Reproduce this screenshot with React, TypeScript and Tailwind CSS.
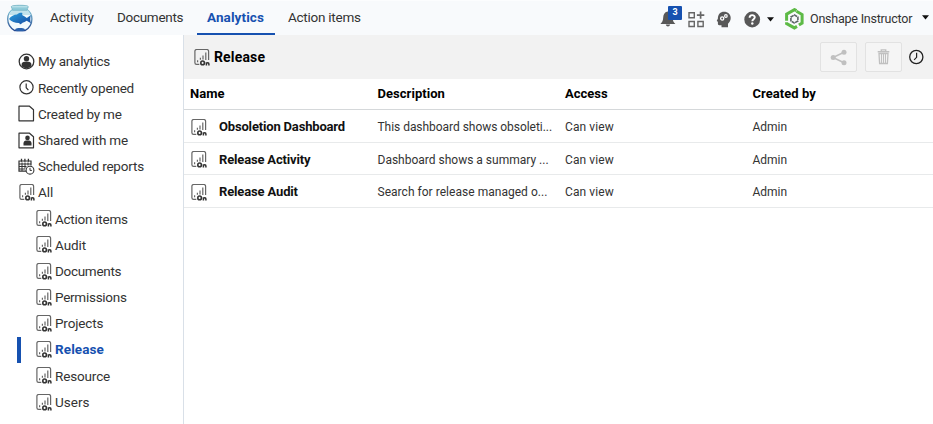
import React from "react";

function ReportIcon({ className = "" }: { className?: string }) {
  return (
    <svg className={`shrink-0 ${className}`} width="17" height="17" viewBox="0 0 17 17" fill="none">
      <path d="M5.300 15.400H2.600A1.700 1.700 0 0 1 .9 13.700V2.200A1.700 1.700 0 0 1 2.600.5H12.900A1.700 1.700 0 0 1 14.600 2.200V11" stroke="#666" strokeWidth="1.200" />
      <path d="M3.600 11.200v2M6.400 8.700v2M9 6.500v4M11.800 3.500v7.500" stroke="#666" strokeWidth="1.200" />
      <ellipse cx="8.600" cy="13.900" rx="1.800" ry="1.900" stroke="#333" strokeWidth="1.600" />
      <path d="M12.400 16.500v-3.300M12.400 14.700c.2-1.200 2.500-1.200 2.500.2v1.600" stroke="#333" strokeWidth="1.500" />
    </svg>
  );
}

function UserIcon() {
  return (
    <svg width="17" height="17" viewBox="0 0 17 17" fill="none">
      <circle cx="8.500" cy="8.500" r="7.300" stroke="#333" strokeWidth="1.300" />
      <circle cx="8.500" cy="5.700" r="2.700" fill="#333" />
      <path d="M3.600 13.200V11.500C3.600 9.600 5 8.900 6.500 8.700h4c1.500.2 2.900.9 2.900 2.800v1.700c-2.600 2.600-7.200 2.600-9.800 0z" fill="#333" />
    </svg>
  );
}

function ClockIcon() {
  return (
    <svg width="17" height="17" viewBox="0 0 17 17" fill="none" stroke="#333" strokeWidth="1.200">
      <circle cx="8.500" cy="8.300" r="6.600" />
      <path d="M8.200 4.400v4.300l2.200 2.400" />
    </svg>
  );
}

function PageIcon({ person = false }: { person?: boolean }) {
  return (
    <svg width="17" height="17" viewBox="0 0 17 17" fill="none">
      <path d="M1 1.200h10.500l4 3.500v11.100H1z" stroke="#333" strokeWidth="1.200" strokeLinejoin="round" />
      {person && (
        <g fill="#333">
          <circle cx="9.500" cy="5.900" r="2.300" />
          <path d="M5.500 13.500v-2.300c0-1.700 1.300-2.700 2.500-2.700h3c1.200 0 2.500 1 2.500 2.700v2.300z" />
        </g>
      )}
    </svg>
  );
}

function ScheduleIcon() {
  return (
    <svg width="17" height="17" viewBox="0 0 17 17" fill="none">
      <path d="M8 13.200H1V3h12v4.500" stroke="#333" strokeWidth="1.200" />
      <path d="M3.500.800v3M6.900.800v3M10.400.800v3" stroke="#333" strokeWidth="1.300" />
      <path d="M1 6h12M1 8.500h7.500M1 11h6M4 4.500v8.500M7 4.500v6M10 4.500v3" stroke="#333" strokeWidth="1" />
      <circle cx="12" cy="12.200" r="3.900" fill="#fff" stroke="#333" strokeWidth="1.100" />
      <path d="M12 9.800v2.600h1.900" stroke="#333" strokeWidth="1" />
    </svg>
  );
}

function FishbowlLogo() {
  return (
    <svg width="28" height="28" viewBox="0 0 28 28" fill="none">
      <defs>
        <linearGradient id="bowl" x1="0" y1="0" x2="0" y2="1">
          <stop offset="0" stopColor="#7fc4d6" />
          <stop offset="1" stopColor="#24488f" />
        </linearGradient>
        <linearGradient id="fish" x1="0" y1="0" x2="1" y2="1">
          <stop offset="0" stopColor="#2aa2df" />
          <stop offset="1" stopColor="#1748a0" />
        </linearGradient>
      </defs>
      <path d="M7 5.300C3.500 7.500 1.700 11 1.700 15c0 5 3 9.300 7 11.600h10.200c4.300-2.300 7-6.600 7-11.600 0-4-1.800-7.500-5.300-9.700z" fill="#f2fafd" stroke="url(#bowl)" strokeWidth="1.300" />
      <path d="M7 5.500C5 7 3.500 9 3 11h21.500c-.7-2-2-4-4-5.500z" fill="#c2e3ec" />
      <path d="M5.300 2.600c0-1.800 17-1.800 17 0 0 1.500-1.200 2-1.200 3.700H6.500c0-1.700-1.200-2.200-1.200-3.700z" fill="#8fcbd9" stroke="#70afc0" strokeWidth=".7" />
      <path d="M6 2.800h15.500" stroke="#c8e8ef" strokeWidth="1" />
      <path d="M3 15c2-3 5-4.300 8-4.500 1.500-1.500 3.500-2 5.500-1.500-.5 1-.5 1.700 0 2.300 1.500.7 3 1.600 4.300 2.600l4.200-3c-1 2.700-1 5.700 0 8.400l-4.300-2.600c-1.500 1-2.700 1.600-4.200 2.100-.5.900-1.700 1.500-2.700 1.500l-.5-1.200c-3.800.2-7.800-1.400-10.300-4.100z" fill="url(#fish)" />
      <path d="M9 25.300c1.500-1.900 8.500-1.900 10 0l-1.500 2h-7z" fill="#2a62ac" />
    </svg>
  );
}

function BellIcon() {
  return (
    <svg width="17" height="18" viewBox="0 0 17 18" fill="#585858">
      <path d="M7.500 1.500c-3 .7-4.200 3-4.300 6-.1 3.700-1.200 5-2.800 6.500h15c-1.700-1.500-2.700-2.800-2.800-6.500-.1-3-1.700-5.500-5.100-6z" />
      <path d="M5.800 14.500h4.300c-.3 2.500-4 2.500-4.300 0z" />
    </svg>
  );
}

function AppsIcon() {
  return (
    <svg width="17" height="17" viewBox="0 0 17 17" fill="none" stroke="#666" strokeWidth="1.400">
      <path d="M1 1.700h5.300v5H1zM1 10.500h5.300v5H1zM9.900 10.500h5.300v5H9.900z" />
      <path d="M12.600.5v7.300M8.900 4.200h7.400" strokeWidth="1.700" />
    </svg>
  );
}

function LearnIcon() {
  return (
    <svg width="16" height="17" viewBox="0 0 16 17" fill="none">
      <path d="M8 .7C12 .7 14.700 3.400 14.700 7c0 2.600-1.200 4.200-2.700 5.700v3.500H5.500v-2H3.300c-1 0-1.400-.5-1.400-1.400v-2L.7 10l1.200-2.600C1.900 3.400 4.400.7 8 .7z" fill="#585858" />
      <circle cx="6.200" cy="7.500" r="1.600" stroke="#fff" strokeWidth="1.300" />
      <circle cx="9.900" cy="5" r="1.300" stroke="#fff" strokeWidth="1.200" />
    </svg>
  );
}

function HelpIcon() {
  return (
    <svg width="17" height="17" viewBox="0 0 17 17" fill="none">
      <circle cx="8.200" cy="8.500" r="7.900" fill="#585858" />
      <path d="M5.600 6.700c0-3.400 5.200-3.300 5.200-.4 0 1.900-2.500 1.900-2.500 3.900" stroke="#fff" strokeWidth="1.900" />
      <circle cx="8.300" cy="12.500" r="1.200" fill="#fff" />
    </svg>
  );
}

function OnshapeLogo() {
  return (
    <svg width="20" height="22" viewBox="0 0 20 22" fill="none" strokeLinejoin="miter">
      <path d="M11.500 2.600 9.500 1.600 1.600 6.200v6.600" stroke="#5dba46" strokeWidth="3" />
      <path d="M11.500 3.300 17.100 6.500v8.600l-3.200 1.900" stroke="#5dba46" strokeWidth="3" />
      <path d="M1.600 14.300v1.200l7.800 4.400 2.600-1.500" stroke="#5dba46" strokeWidth="3" />
      <path d="m9.400 7 3.500 2v4l-3.500 2-3.500-2V9z" stroke="#5b6266" strokeWidth="1.600" strokeDasharray="3.300 .7" />
    </svg>
  );
}

function Caret() {
  return (
    <svg width="7" height="5" viewBox="0 0 7 5">
      <path d="M0 .3h7L3.500 4.600z" fill="#111" />
    </svg>
  );
}

const nav = [
  { label: "Activity", cls: "w-[67px] tracking-[-0.05px]" },
  { label: "Documents", cls: "w-[90px] tracking-[-0.3px]" },
  { label: "Analytics", cls: "w-[81px] font-bold text-[#1651b0] tracking-[0.1px]", active: true },
  { label: "Action items", cls: "tracking-[-0.25px]" },
];

const filters = [
  { label: "My analytics", icon: <UserIcon />, fit: "tracking-[-0.25px]" },
  { label: "Recently opened", icon: <ClockIcon />, fit: "tracking-[-0.22px]" },
  { label: "Created by me", icon: <PageIcon />, fit: "tracking-[-0.22px]" },
  { label: "Shared with me", icon: <PageIcon person />, fit: "tracking-[-0.22px]" },
  { label: "Scheduled reports", icon: <ScheduleIcon />, fit: "tracking-[-0.2px]" },
  { label: "All", icon: <ReportIcon className="ml-px" />, fit: "" },
];

const folders = [
  { label: "Action items", fit: "tracking-[-0.25px]" },
  { label: "Audit", fit: "tracking-[-0.1px]" },
  { label: "Documents", fit: "tracking-[-0.3px]" },
  { label: "Permissions", fit: "tracking-[-0.27px]" },
  { label: "Projects", fit: "tracking-[-0.15px]" },
  { label: "Release", fit: "tracking-[0.1px]" },
  { label: "Resource", fit: "tracking-[-0.15px]" },
  { label: "Users", fit: "" },
];

const rows = [
  { name: "Obsoletion Dashboard", fit: "tracking-[-0.17px]", text: "This dashboard shows obsoleti...", textFit: "tracking-[-0.04px]", h: "h-[33px]" },
  { name: "Release Activity", fit: "tracking-[-0.17px]", text: "Dashboard shows a summary ...", textFit: "", h: "h-[32px]" },
  { name: "Release Audit", fit: "tracking-[-0.15px]", text: "Search for release managed o...", textFit: "tracking-[0.03px]", h: "h-[33px]" },
];

export default function App() {
  return (
    <div className="flex h-[424px] w-[933px] flex-col overflow-hidden bg-white font-['Roboto',sans-serif] text-[13.5px] text-[#333]">
      <header className="flex h-[35px] shrink-0 border-t border-[#fcfdfe] bg-[#f8fafc]">
        <div className="w-[50px] pt-[3px] pl-[6px]">
          <FishbowlLogo />
        </div>
        <nav className="flex flex-1">
          {nav.map((n) => (
            <div key={n.label} className={`relative flex items-center pb-px whitespace-nowrap ${n.cls}`}>
              {n.label}
              {n.active && <span className="absolute bottom-0 -left-[10px] h-[2px] w-[78px] bg-[#1651b0]" />}
            </div>
          ))}
        </nav>
        <div className="flex w-[273px] items-center pt-[2px]">
          <div className="relative w-[28px]">
            <BellIcon />
            <span className="absolute -top-[4px] left-[8px] flex h-[14px] w-[14px] items-center justify-center rounded-[1px] bg-[#1651b0] text-[9px] font-bold text-white">3</span>
          </div>
          <div className="w-[28px]"><AppsIcon /></div>
          <div className="w-[28px]"><LearnIcon /></div>
          <div className="w-[23px]"><HelpIcon /></div>
          <div className="w-[18px]"><Caret /></div>
          <div className="w-[25px]"><OnshapeLogo /></div>
          <div className="w-[112px] text-[12.5px] tracking-[-0.22px] whitespace-nowrap">Onshape Instructor</div>
          <div className="pb-[3px]"><Caret /></div>
        </div>
      </header>
      <div className="flex min-h-0 flex-1">
        <aside className="w-[184px] shrink-0 border-r border-[#d9e0e8] pt-[13.500px]">
          {filters.map((f) => (
            <div key={f.label} className={`flex h-[26.200px] items-center gap-[3px] pl-[18px] whitespace-nowrap ${f.fit}`}>
              <span className="flex w-[17px]">{f.icon}</span>
              {f.label}
            </div>
          ))}
          {folders.map((f) => (
            <div key={f.label} className={`ml-[17px] flex h-[26.200px] items-center gap-[2px] whitespace-nowrap ${f.fit} ${f.label === "Release" ? "border-l-4 border-[#1651b0] pb-px pl-[15px] font-bold text-[#1651b0]" : "pl-[19px]"}`}>
              <ReportIcon />
              {f.label}
            </div>
          ))}
        </aside>
        <main className="flex-1">
          <div className="flex h-[44px] items-center bg-[#f2f2f2] pl-[10px]">
            <ReportIcon />
            <h1 className="flex-1 pl-[3px] text-[14px] font-bold tracking-[0.15px] text-black">Release</h1>
            <button className="mr-[8px] flex h-[30px] w-[37px] items-center justify-center rounded-[2px] border border-[#e2e2e2] bg-[#f5f5f5]">
              <svg width="17" height="17" viewBox="0 0 17 17" fill="#c0c0c0">
                <path d="M14 3.300 3 8.500l11 5.200" fill="none" stroke="#c0c0c0" strokeWidth="1.500" />
                <circle cx="14" cy="3.300" r="2.500" />
                <circle cx="3.200" cy="8.500" r="2.500" />
                <circle cx="14" cy="13.700" r="2.500" />
              </svg>
            </button>
            <button className="mr-[6px] flex h-[30px] w-[37px] items-center justify-center rounded-[2px] border border-[#e2e2e2] bg-[#f5f5f5]">
              <svg width="13" height="16" viewBox="0 0 13 16" fill="none" stroke="#c0c0c0">
                <path d="M.7 2.800h11.600M4.300 2.300V.9h4.400v1.400" strokeWidth="1.400" />
                <path d="M2 4.500h9l-.6 10H2.600z" strokeWidth="1.300" />
                <path d="M4.500 5v9M6.500 5v9M8.500 5v9" strokeWidth="1.100" />
              </svg>
            </button>
            <svg className="mr-[9px]" width="16" height="16" viewBox="0 0 16 16" fill="none" stroke="#222" strokeWidth="1.300">
              <circle cx="8.300" cy="8" r="6.600" />
              <path d="M8.600 3.800v4.500l-2.500 2.500" strokeWidth="1.200" />
            </svg>
          </div>
          <div className="flex h-[31px] items-center border-b border-[#d5d8da] pl-[6px] text-[13px] font-bold text-black">
            <div className="w-[187.500px]">Name</div>
            <div className="w-[187.500px] tracking-[0.05px]">Description</div>
            <div className="w-[187.500px]">Access</div>
            <div className="tracking-[0.05px]">Created by</div>
          </div>
          {rows.map((r) => (
            <div key={r.name} className={`flex items-center border-b border-[#e8eaeb] pt-[2px] pl-[6px] text-[12px] whitespace-nowrap ${r.h}`}>
              <div className={`flex w-[187.500px] items-center gap-[11px] text-[13px] font-bold text-[#111] ${r.fit}`}>
                <ReportIcon className="ml-px" />
                {r.name}
              </div>
              <div className={`w-[187.500px] ${r.textFit}`}>{r.text}</div>
              <div className="w-[187.500px] tracking-[0.1px]">Can view</div>
              <div>Admin</div>
            </div>
          ))}
        </main>
      </div>
    </div>
  );
}
